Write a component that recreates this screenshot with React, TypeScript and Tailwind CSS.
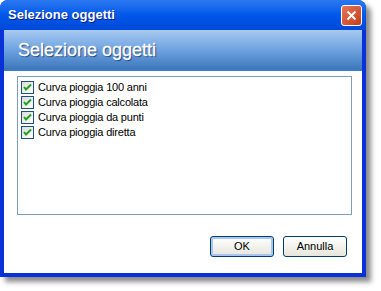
import React from "react";

const items = [
  "Curva pioggia 100 anni",
  "Curva pioggia calcolata",
  "Curva pioggia da punti",
  "Curva pioggia diretta",
];

function Check() {
  return (
    <span className="flex h-[13px] w-[13px] shrink-0 items-center justify-center border border-[#1c5180] bg-gradient-to-br from-[#dcdcd7] to-[#ffffff]">
      <svg width="9" height="9" viewBox="0 0 9 9">
        <path d="M1 4 L3 6.5 L8 1.5" stroke="#21a121" strokeWidth="2" fill="none" />
      </svg>
    </span>
  );
}

export default function App() {
  return (
    <div className="h-[291px] w-[381px] bg-white" style={{ fontFamily: "Tahoma, 'Liberation Sans', Arial, sans-serif" }}>
      <div className="flex h-[277px] w-[366px] flex-col overflow-hidden rounded-t-[8px] bg-[#0831d9] shadow-[5px_5px_5px_rgba(0,0,0,0.45)]">
        <div className="flex h-[30px] shrink-0 items-center justify-between bg-gradient-to-b from-[#2a78f0] via-[#0058ea] to-[#0048d8] pl-[8px] pr-[4px]">
          <span className="text-[13px] font-bold text-white [text-shadow:1px_1px_0_#0a1e8c]">Selezione oggetti</span>
          <div className="flex h-[21px] w-[21px] items-center justify-center rounded-[3px] border border-white bg-gradient-to-br from-[#e8745a] to-[#c43c14]">
            <svg width="11" height="11" viewBox="0 0 11 11">
              <path d="M1.5 1.5 L9.5 9.5 M9.5 1.5 L1.5 9.5" stroke="white" strokeWidth="2" />
            </svg>
          </div>
        </div>
        <div className="mx-[4px] mb-[4px] flex flex-1 flex-col bg-white">
          <div className="flex h-[41px] shrink-0 items-center border-b border-[#3a80d0] bg-gradient-to-b from-[#a7caf1] via-[#6da2e0] to-[#3b76bb] pl-[14px]">
            <span className="text-[18px] text-white [text-shadow:1px_1px_1px_#1e3f73]" style={{ fontFamily: "'Liberation Sans', Arial, sans-serif", WebkitTextStroke: "0.3px white" }}>
              Selezione oggetti
            </span>
          </div>
          <div className="ml-[13px] mr-[10px] mt-[5px] flex h-[139px] flex-col border border-[#7f9db9] bg-white pl-[3px] pt-[3px]">
            {items.map((t) => (
              <div key={t} className="flex h-[15px] items-center gap-[4px]">
                <Check />
                <span className="text-[11px] leading-none tracking-[-0.2px] text-black">{t}</span>
              </div>
            ))}
          </div>
          <div className="mt-[21px] flex justify-end gap-[9px] pr-[15px]">
            <button className="h-[21px] w-[64px] rounded-[3px] border border-[#003c74] bg-gradient-to-b from-[#ffffff] to-[#e6e6dc] text-[11px] text-black shadow-[inset_0_0_0_2px_#a8c6f0]">
              OK
            </button>
            <button className="h-[21px] w-[64px] rounded-[3px] border border-[#003c74] bg-gradient-to-b from-[#ffffff] to-[#e6e6dc] text-[11px] text-black">
              Annulla
            </button>
          </div>
        </div>
      </div>
    </div>
  );
}
